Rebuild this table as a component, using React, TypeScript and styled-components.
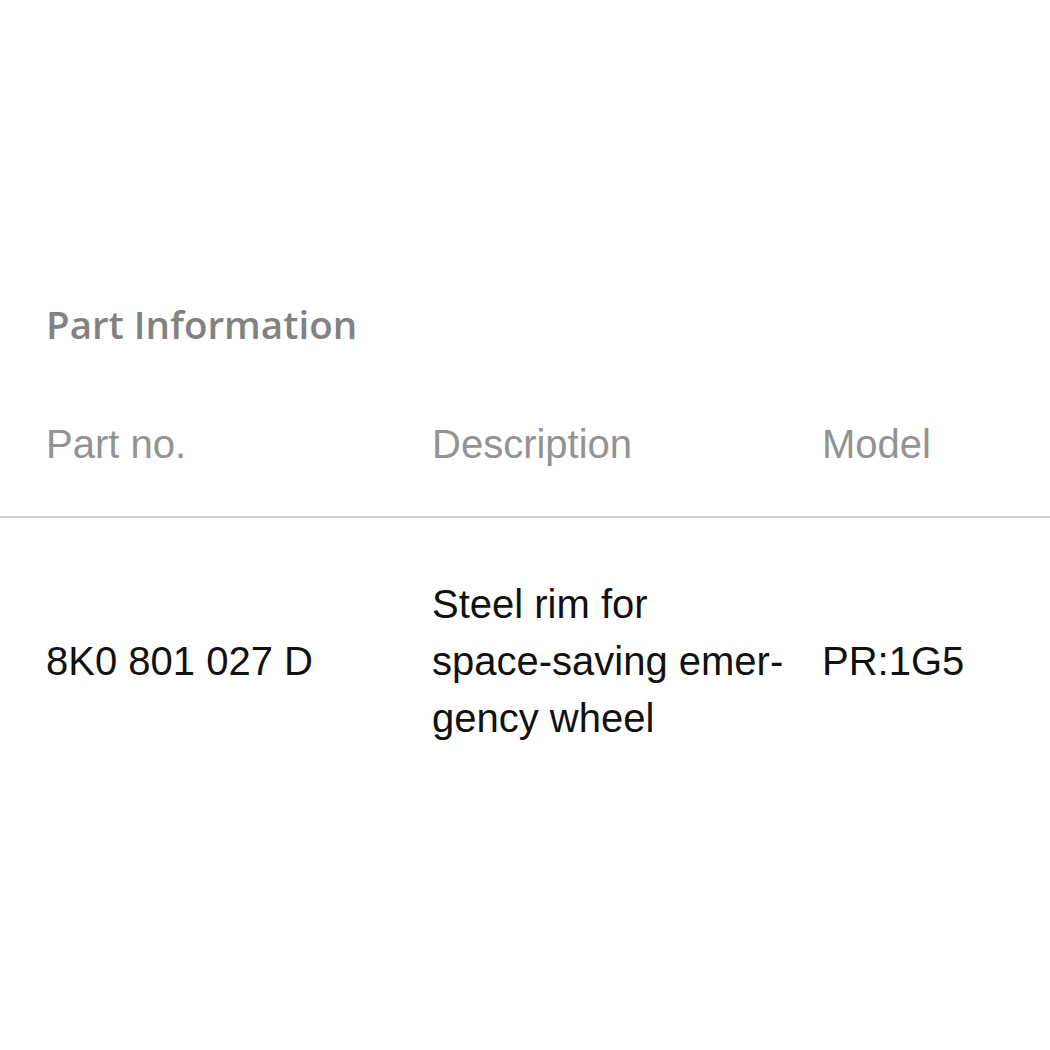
import React from "react";
import styled, { createGlobalStyle } from "styled-components";

const GlobalStyle = createGlobalStyle`
  html, body { margin: 0; padding: 0; background: #ffffff; }
  body { font-family: "Liberation Sans", Arial, sans-serif; }
`;

const Page = styled.div`
  width: 1050px;
  min-height: 1050px;
  padding-top: 296px;
  box-sizing: border-box;
`;

const Title = styled.h2`
  margin: 0 0 63px 46px;
  font-family: "Open Sans", "Liberation Sans", sans-serif;
  font-weight: 600;
  font-size: 38.5px;
  line-height: 57px;
  color: #828282;
  letter-spacing: 0;
`;

const Table = styled.div`
  display: grid;
  grid-template-columns: 432px 390px 1fr;
  font-size: 40px;
  line-height: 57px;
`;

const HeadCell = styled.div`
  padding: 0 0 43px 0;
  color: #939393;
  border-bottom: 2px solid #cfcfcf;
  &:first-child { padding-left: 46px; }
`;

const Cell = styled.div<{ $first?: boolean }>`
  padding: 58px 0 0 ${(p) => (p.$first ? "46px" : "0")};
  color: #111111;
  display: flex;
  align-items: center;
`;

const DescText = styled.div`
  width: 370px;
`;

const NoWrap = styled.span`
  white-space: nowrap;
`;

export default function App() {
  return (
    <>
      <GlobalStyle />
      <Page>
        <Title>Part Information</Title>
        <Table>
          <HeadCell>Part no.</HeadCell>
          <HeadCell>Description</HeadCell>
          <HeadCell>Model</HeadCell>
          <Cell $first>8K0 801 027 D</Cell>
          <Cell>
            <DescText>
              Steel rim for <NoWrap>space-saving</NoWrap> emer{"\u00AD"}gency wheel
            </DescText>
          </Cell>
          <Cell>PR:1G5</Cell>
        </Table>
      </Page>
    </>
  );
}
